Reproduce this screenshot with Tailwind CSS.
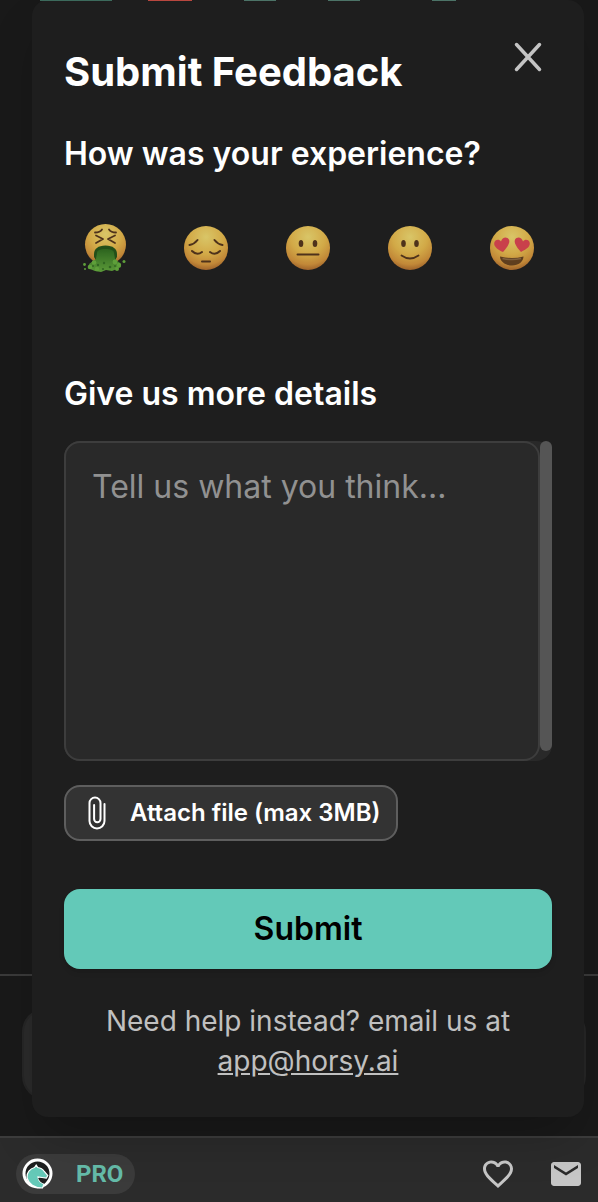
<!DOCTYPE html>
<html lang="en">
<head>
  <meta charset="UTF-8" />
  <meta name="viewport" content="width=device-width, initial-scale=1.0" />
  <title>Submit Feedback - Horsy</title>
  <script src="https://cdn.jsdelivr.net/npm/@tailwindcss/browser@4"></script>
</head>
<body class="relative flex min-h-screen flex-col bg-[#191919] font-['Inter','Liberation_Sans',sans-serif] text-white">

  <!-- Page behind the dialog -->
  <main class="flex flex-1 flex-col justify-end">
    <div class="border-t-2 border-[#3a3a3a] pt-8 pr-3 pb-9 pl-[22px]">
      <div class="h-23 rounded-3xl border-2 border-[#262626] bg-[#2b2b2b]"></div>
    </div>
  </main>

  <footer class="flex items-center justify-between border-t-2 border-[#3c3c3c] bg-[#2b2b2b] pt-4 pr-3.5 pb-2 pl-4">
    <div class="flex h-10 items-center gap-[22px] rounded-full bg-[#3b3b3b] pr-3 pl-1.5">
      <svg class="size-8" viewBox="0 0 32 32" aria-hidden="true">
        <circle cx="15.500" cy="15.500" r="13.500" fill="#1d1f1f" stroke="#fff" stroke-width="3" />
        <path d="M12.500 9.500l1.700-2.500 1.600 2.500c3 .3 5 1.700 6.500 4l3.500 4-1.500 2.700-4.300-.7-4-.5c.5 3.500 3 6 6 7l-1.500 4c-8 0-14-4-15.500-10.500C4.500 15 8 10.500 12.500 9.500z" fill="#65c9b8" stroke="#fff" stroke-width="1.200" />
        <path d="M16 20l4.500 1 4.500.5c-.3 1.700-1.300 3.200-2.500 4.200-3-.7-5.500-2.700-6.500-5.700z" fill="#1d1f1f" />
      </svg>
      <span class="font-['Roboto','Liberation_Sans',sans-serif] text-2xl font-bold text-[#65bba9]">PRO</span>
    </div>
    <div class="flex items-center gap-8">
      <button type="button" aria-label="Favorites">
        <svg class="size-9" viewBox="0 0 24 24" fill="#c6c6c6">
          <path d="M16.500 3c-1.740 0-3.410.810-4.500 2.090C10.910 3.810 9.240 3 7.500 3 4.420 3 2 5.420 2 8.500c0 3.780 3.400 6.860 8.550 11.540L12 21.350l1.450-1.320C18.600 15.360 22 12.280 22 8.500 22 5.420 19.580 3 16.500 3zm-4.400 15.550l-.1.100-.1-.1C7.140 14.240 4 11.390 4 8.500 4 6.500 5.500 5 7.500 5c1.540 0 3.040.990 3.570 2.360h1.870C13.460 5.990 14.960 5 16.500 5c2 0 3.500 1.500 3.500 3.500 0 2.890-3.140 5.740-7.900 10.050z" />
        </svg>
      </button>
      <button type="button" aria-label="Messages">
        <svg class="size-9" viewBox="0 0 24 24" fill="#c6c6c6">
          <path d="M20 4H4c-1.100 0-2 .9-2 2v12c0 1.100.9 2 2 2h16c1.100 0 2-.9 2-2V6c0-1.100-.9-2-2-2zm0 4l-8 5-8-5V6l8 5 8-5v2z" />
        </svg>
      </button>
    </div>
  </footer>

  <!-- Feedback dialog -->
  <div role="dialog" aria-labelledby="feedbackTitle" class="absolute top-0 right-3.5 left-8 rounded-2xl bg-[#1e1e1e] px-8 pt-12 pb-9 shadow-2xl">
    <!-- bottom edge of the chips scrolled under the dialog -->
    <div class="absolute top-0 left-2 flex gap-9">
      <div class="h-px w-18 bg-[#3c6a5c]"></div>
      <div class="h-px w-11 bg-[#b9473f]"></div>
      <div class="ml-4 h-px w-8 bg-[#4c7367]"></div>
      <div class="ml-4 h-px w-8 bg-[#4c7367]"></div>
      <div class="ml-9 h-px w-6 bg-[#4c7367]"></div>
    </div>

    <button type="button" aria-label="Close" class="absolute top-9 right-9">
      <svg class="size-10" viewBox="0 0 40 40" fill="none" stroke="#c4c4c4" stroke-width="3.500" stroke-linecap="round">
        <path d="M8.500 8.500l23 25M31.500 8.500l-23 25" />
      </svg>
    </button>

    <form id="feedbackForm">
      <h2 id="feedbackTitle" class="text-[40px] leading-12 font-bold">Submit Feedback</h2>
      <h3 class="mt-10 text-[32px] leading-9 font-semibold">How was your experience?</h3>

      <div class="mt-9 flex justify-between">
        <button type="button" aria-label="Terrible" class="flex size-20 items-center justify-center opacity-90">
          <svg class="size-12" viewBox="0 0 48 48">
            <defs>
              <radialGradient id="face" cx="50%" cy="25%" r="78%">
                <stop offset="0" stop-color="#eed870" />
                <stop offset="0.500" stop-color="#e6b94c" />
                <stop offset="0.800" stop-color="#d4943b" />
                <stop offset="1" stop-color="#a4622a" />
              </radialGradient>
              <linearGradient id="sick" x1="0" y1="0" x2="0" y2="1">
                <stop offset="0" stop-color="#2f6c1f" />
                <stop offset="1" stop-color="#62a83c" />
              </linearGradient>
            </defs>
            <circle cx="25.500" cy="20.500" r="20.500" fill="url(#face)" />
            <g fill="none" stroke="#54351b" stroke-width="1.800" stroke-linecap="round" stroke-linejoin="round">
              <path d="M15 8.500q5 0 7-3M29 5.500q2 3 7 3M16 11.500l7 3.500-7 4M35 11.500l-7 3.500 7 4" />
            </g>
            <path d="M14 33v-3c0-5 4-8.500 11.500-8.500S37 25 37 30v3l-3 5H17z" fill="#245519" />
            <path d="M17 29c0-3 4-4 8.500-4s8.500 1 8.500 4l1 6 5 4 1 4-4 2-5 2-6-1-5 2-6-1-5-2-1-5 7-5z" fill="url(#sick)" />
            <g fill="#66ae3e">
              <circle cx="4.500" cy="40.500" r="1.400" /><circle cx="10" cy="43" r="2.300" /><circle cx="14" cy="38.500" r="2.300" />
              <circle cx="17" cy="45" r="2.200" /><circle cx="35" cy="38" r="2.400" /><circle cx="39" cy="41" r="2.200" />
              <circle cx="37" cy="45" r="2" /><circle cx="44" cy="37.500" r="1.500" /><circle cx="5" cy="45" r="1" />
            </g>
            <g fill="#346f23">
              <circle cx="18" cy="41" r="1.200" /><circle cx="24" cy="39" r="1.200" /><circle cx="30" cy="43" r="1.300" />
              <circle cx="23" cy="45" r="1.100" /><circle cx="35" cy="42" r="1" /><circle cx="13" cy="42" r="1" />
            </g>
          </svg>
        </button>
        <button type="button" aria-label="Bad" class="flex size-20 items-center justify-center opacity-90">
          <svg class="size-12" viewBox="0 0 48 48">
            <circle cx="24" cy="24" r="22" fill="url(#face)" />
            <g fill="none" stroke="#54351b" stroke-width="2" stroke-linecap="round">
              <path d="M7.500 21q5-1 8-5M32.500 16q3 4 8 5M10 27q5 5 10 1M28 28q5 4 10-1M20 37.500h8" />
            </g>
          </svg>
        </button>
        <button type="button" aria-label="Okay" class="flex size-20 items-center justify-center opacity-90">
          <svg class="size-12" viewBox="0 0 48 48">
            <circle cx="24" cy="24" r="22" fill="url(#face)" />
            <ellipse cx="17" cy="19.500" rx="2.300" ry="3.500" fill="#54351b" />
            <ellipse cx="31" cy="19.500" rx="2.300" ry="3.500" fill="#54351b" />
            <path d="M13.500 30.500h21" stroke="#54351b" stroke-width="2" stroke-linecap="round" />
          </svg>
        </button>
        <button type="button" aria-label="Good" class="flex size-20 items-center justify-center opacity-90">
          <svg class="size-12" viewBox="0 0 48 48">
            <circle cx="24" cy="24" r="22" fill="url(#face)" />
            <ellipse cx="17.500" cy="19.500" rx="2.300" ry="3.500" fill="#54351b" />
            <ellipse cx="30.500" cy="19.500" rx="2.300" ry="3.500" fill="#54351b" />
            <path d="M15.500 31.500q8.500 6 17 0" fill="none" stroke="#54351b" stroke-width="1.800" stroke-linecap="round" />
          </svg>
        </button>
        <button type="button" aria-label="Love it" class="flex size-20 items-center justify-center opacity-90">
          <svg class="size-12" viewBox="0 0 48 48">
            <circle cx="24" cy="24" r="22" fill="url(#face)" />
            <path d="M15 28C9 25 5 22 6.500 18c1.200-3 5-3 6.500-.5 1-3.500 4-5 6.500-3.500 4 2.500 1 8-4.500 14z" fill="#dc4450" />
            <path d="M33 28c6-3 10-6 8.500-10-1.200-3-5-3-6.500-.5-1-3.500-4-5-6.500-3.500-4 2.500-1 8 4.500 14z" fill="#dc4450" />
            <path d="M12 32.500q12 3 23.500 0c0 5-5 9-11.500 9s-12-4-12-9z" fill="#67421e" />
            <path d="M14.500 34.500q9.500 2 18.500 0" fill="none" stroke="#8d6a42" stroke-width="1.500" />
          </svg>
        </button>
      </div>

      <label for="details" class="mt-22 block text-[32px] leading-9 font-semibold">Give us more details</label>
      <div class="mt-[29px] flex rounded-2xl bg-[#292929]">
        <textarea id="details" placeholder="Tell us what you think..." class="block h-80 min-w-0 flex-1 resize-none overflow-hidden rounded-2xl border-2 border-[#3d3d3d] bg-[#292929] px-[26px] py-6 text-[32px] leading-10 text-white outline-none placeholder:text-[#919191]"></textarea>
        <div class="mb-2.5 w-3 rounded-full bg-[#555555]"></div>
      </div>

      <button type="button" class="mt-6 flex h-14 items-center gap-4 rounded-2xl border-2 border-[#5e5e5e] bg-[#333333] px-4 text-2xl font-semibold">
        <svg class="h-9 w-8" viewBox="0 0 32 36" fill="none" stroke="#fff" stroke-width="2" stroke-linecap="round">
          <path d="M22.500 9v17a7.500 7.500 0 0 1-15 0V8a5.500 5.500 0 0 1 11 0v16a3.200 3.200 0 0 1-6.400 0V10" />
        </svg>
        Attach file (max 3MB)
      </button>

      <button type="submit" class="mt-12 h-20 w-full rounded-2xl bg-[#63c9b8] text-[32px] font-semibold text-black shadow-md">Submit</button>
    </form>

    <p class="mt-8 text-center text-[28px] leading-10 text-[#c0c0c0]">
      Need help instead? email us at<br />
      <a href="mailto:app@horsy.ai" class="underline">app@horsy.ai</a>
    </p>
  </div>

</body>
</html>
